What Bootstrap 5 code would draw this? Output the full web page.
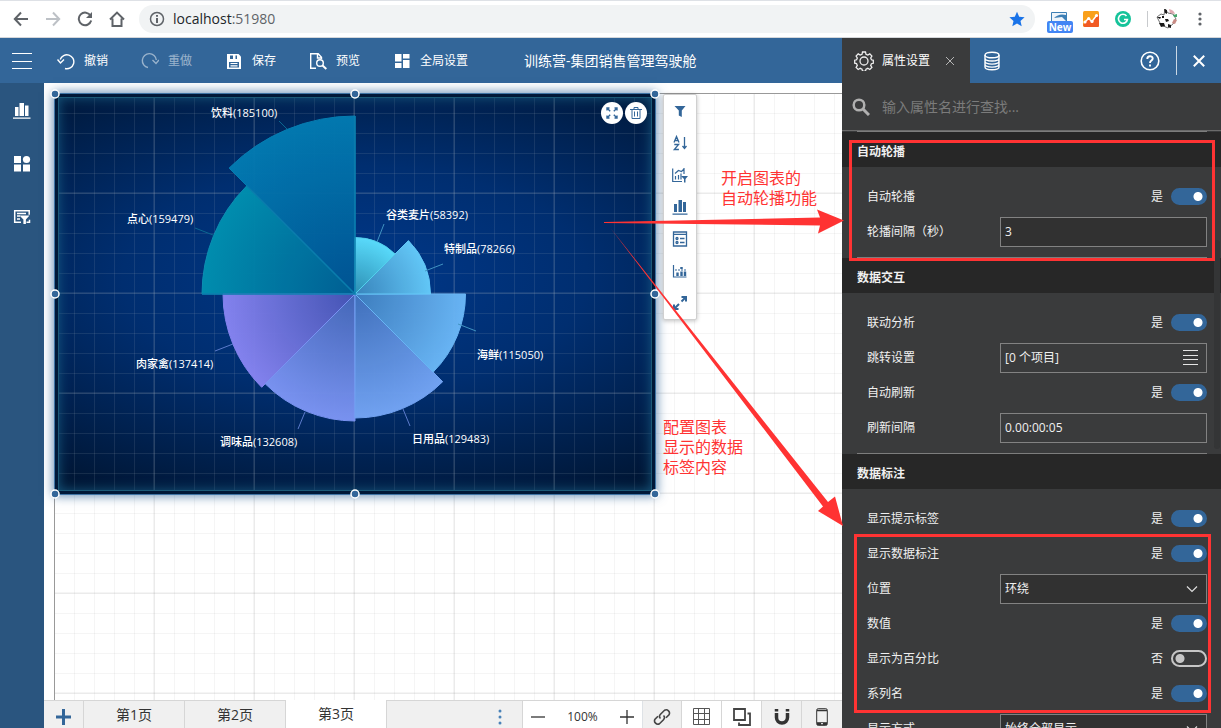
<!DOCTYPE html>
<html lang="zh-CN">
<head>
<meta charset="utf-8">
<meta name="viewport" content="width=device-width, initial-scale=1">
<title>训练营-集团销售管理驾驶舱</title>
<link href="https://cdn.jsdelivr.net/npm/bootstrap@5.3.0/dist/css/bootstrap.min.css" rel="stylesheet">
<style>
:root{--brand:#336699;--side:#2a557f;--panel:#3a3b3c;--note:#ff3333}
body{font-family:"Open Sans","Noto Sans CJK SC",sans-serif;font-size:12px;line-height:16px;color:#333;background:#fff}
svg{display:block;flex:none}
button{color:inherit;font-size:inherit}
.plain{background:none;border:0;padding:0}
/* browser bar */
.chromebar{height:38px;border-top:1px solid #dee1e6;border-bottom:1px solid #d5d7da;color:#5f6368;padding:0 15px 0 13px}
.navset{margin-right:14px}
.navset .plain{width:16px}
.omnibox{height:28px;border-radius:14px;background:#f1f3f4;padding:0 10px}
.urltext{font-size:14px;line-height:20px;color:#5f6368}
.newtag{left:-4px;top:10px;height:12px;width:26px;background:#4285f4;color:#fff;border-radius:2px;font:bold 10px/12px "Open Sans",sans-serif;text-align:center}
.vline{width:1px;height:16px;background:#c8cacd}
.more{width:12px}
/* application bars */
.topbar{height:45px;background:var(--brand);color:#fff}
.burger{width:44px}
.tools{padding-left:13px}
.tool{gap:9px;margin-right:33px}
.doc-title{font-size:14px;line-height:20px;margin-left:23px}
.sidebar{width:44px;background:var(--side);color:#fff;padding-top:18px;gap:34px}
/* canvas */
.stage{padding:10px 0 0 10px}
.sheet{border-left:1px solid #999;border-top:1px solid #999}
.sheet::before,.widget::before{content:"";position:absolute;inset:0;
 background-image:linear-gradient(90deg,var(--ln) 2px,transparent 2px),linear-gradient(var(--ln) 2px,transparent 2px),linear-gradient(90deg,var(--ln) 1px,transparent 1px),linear-gradient(var(--ln) 1px,transparent 1px);
 background-size:100px 100px,100px 100px,20px 20px,20px 20px;background-position:-2px 0,0 -2px,-1px 0,0 -1px}
.sheet{--ln:rgba(0,0,0,.04)}
.widget{--ln:rgba(170,180,190,.13);width:600px;height:400px;left:0;top:0;
 background:radial-gradient(ellipse 86% 62% at 50% 46%,#00388a 0%,#002e70 45%,#001634 100%);
 box-shadow:0 0 0 1px #3f74a5,0 0 10px 2px rgba(51,102,153,.75)}
.widget::after{content:"";position:absolute;inset:3px;border:1px solid #1c5a78;box-shadow:inset 0 0 12px 0 rgba(30,105,145,.75),0 0 0 3px #001838}
.widget>svg{position:absolute;inset:0;z-index:1;overflow:visible}
.chart-text{font-size:11px;font-weight:500;fill:#fff}
.widget-acts{top:8px;right:8px;z-index:2;gap:2px}
.round{width:22px;height:22px;border-radius:50%;background:#fff;color:var(--brand);border:0;padding:0}
.palette{left:608px;top:0;width:34px;padding:0;background:#fff;border:1px solid #d0d0d0;border-radius:2px;box-shadow:0 1px 4px rgba(0,0,0,.25);color:var(--brand)}
.palette .plain{height:32px}
.notes{position:absolute;right:-4px;top:-83px;z-index:5;pointer-events:none}
.note{position:absolute;z-index:5;margin:0;color:var(--note);font-family:"Liberation Sans","Noto Sans CJK SC",sans-serif;font-size:16px;line-height:20px}
.note-a{right:25px;top:86px}
.note-b{right:99px;top:335px}
/* page bar */
.pagebar{height:28px;background:#f0f0f0;border-top:1px solid #d6d6d6;font-size:14px}
.pagebar .plain{border-right:1px solid #d6d6d6}
.add{width:40px}
.page-tab{width:101px;font-size:14px}
.page-tab.active{background:#fff;margin-top:-1px}
.zoomer{width:120px;background:#fff;border-left:1px solid #d6d6d6;font-size:12px}
.zoomer .plain{border:0}
.pagebar .tail{width:40px;padding-top:4px}
.pagebar .tail:last-child{border:0}
/* property panel */
.panel{width:379px;background:var(--panel);color:#f0f0f0}
.ptab{width:128px;background:var(--panel);padding:0 15px 0 12px}
.dbtab{margin-left:14px}
.finder{height:48px;padding:0 10px;border-bottom:1px solid #6b6b6b}
.finder input{background:none;border:0;outline:0;color:#ddd;font-size:14px;line-height:20px;padding:0}
.finder input::placeholder{color:#7b7b7b}
.rule{height:1px;margin:0 14px 0 15px;background:#7d7d7d}
.sec-title{height:35px;background:#272727;font-size:12px;line-height:16px;font-weight:600;margin:0;padding:4px 15px 0}
.sec-body{padding:12px 14px 8px 25px}
.prop{height:35px}
.field,.form-select.field{width:207px;height:30px;border:1px solid #828282;border-radius:0;background-color:#313131;color:#f0f0f0;font-size:12px;line-height:16px;padding:0 4px}
.field.flat{background-color:var(--panel)}
.form-select.field{background-image:url("data:image/svg+xml,%3Csvg xmlns='http://www.w3.org/2000/svg' viewBox='0 0 12 12'%3E%3Cpath d='M1 3.5l5 5 5-5' fill='none' stroke='%23ddd' stroke-width='1.2'/%3E%3C/svg%3E");background-size:12px 12px;background-position:right 8px center}
.prop .form-check-input{width:36px;height:17px;margin:0;float:none;border-radius:9px;border:2px solid #c6c6c6;background:radial-gradient(circle at 7px 50%,#c6c6c6 4px,transparent 5px)}
.prop .form-check-input:checked{border-color:var(--brand);background:radial-gradient(circle at 25px 50%,#fff 4px,transparent 5px) var(--brand)}
.frame-a,.frame-b{position:absolute;border:3px solid var(--note);pointer-events:none;z-index:3}
.frame-a{inset:8px 6px -3px 7px}
.frame-b{inset:-2px -4px 33px -13px}
.thumb{position:absolute;right:1px;top:108px;width:6px;height:209px;border-radius:3px;background:#343536}
</style>
</head>
<body class="vh-100 d-flex flex-column overflow-hidden">
<header class="chromebar d-flex align-items-center flex-shrink-0">
  <div class="navset d-flex gap-3">
    <button class="plain" aria-label="后退"><svg width="16" height="16" fill="none" stroke="#5f6368" stroke-width="2"><path d="M15 8H2.500M8 1.500L1.800 8 8 14.500"/></svg></button>
    <button class="plain" aria-label="前进"><svg width="16" height="16" fill="none" stroke="#bdc1c6" stroke-width="2"><path d="M1 8h12.500M8 1.500L14.200 8 8 14.500"/></svg></button>
    <button class="plain" aria-label="刷新"><svg width="16" height="16" fill="none" stroke="#5f6368" stroke-width="2"><path d="M13.600 4.800A6.300 6.300 0 1 0 14.200 9.500"/><path d="M15 1v6H9z" fill="#5f6368" stroke="none"/></svg></button>
    <button class="plain" aria-label="主页"><svg width="16" height="16" fill="none" stroke="#5f6368" stroke-width="2"><path d="M1 8.500L8 1.600l7 6.900M3.500 7.500V15h9V7.500"/></svg></button>
  </div>
  <div class="omnibox d-flex align-items-center flex-grow-1 gap-2">
    <svg width="16" height="16" fill="none" stroke="#5f6368" stroke-width="1.500"><circle cx="8" cy="8" r="6.500"/><path d="M8 7v5M8 4v1.700" stroke-width="2"/></svg>
    <div class="urltext flex-grow-1"><span class="text-dark">localhost</span>:51980</div>
    <svg width="16" height="16" fill="#1a73e8"><path d="M8 .8l2.200 5 5.400.5-4.100 3.600 1.200 5.300L8 12.400l-4.700 2.800 1.200-5.300L.4 6.300l5.400-.5z"/></svg>
  </div>
  <div class="d-flex align-items-center gap-3 ps-3">
    <div class="position-relative"><svg width="16" height="16"><path d="M.5 1.500h15v9H.5z" fill="#eef4fa" stroke="#3c7fb5"/><path d="M3 7q5-5 12-3v6l-4-4z" fill="#3c7fb5"/></svg><span class="newtag position-absolute">New</span></div>
    <svg width="16" height="16"><rect width="16" height="16" rx="1.500" fill="#f9a01b"/><path d="M0 14L6 7l3 3 7-7v11.500a1.500 1.500 0 0 1-1.500 1.500h-13z" fill="#f15a24"/><path d="M1.500 11.500L5.500 7.500l3.500 3 4.500-6" fill="none" stroke="#fff" stroke-width="1.500"/><g fill="#fff"><circle cx="2" cy="11" r="1.600"/><circle cx="5.700" cy="7.500" r="1.600"/><circle cx="9" cy="10.500" r="1.600"/><circle cx="13.500" cy="4.500" r="1.600"/></g></svg>
    <svg width="16" height="16"><circle cx="8" cy="8" r="8" fill="#15c39a"/><path d="M11.500 5A4.500 4.500 0 1 0 12.400 8.500H9" fill="none" stroke="#fff" stroke-width="1.600"/></svg>
    <div class="d-flex align-items-center gap-2"><div class="vline"></div>
    <svg width="22" height="22"><path d="M1 9l4-3 3 1 1-6 3 4 5 1 3 5-3 5-5 4-7-3z" fill="#fff" stroke="#333" stroke-width=".7"/><path d="M8 1l3 1 0 4-2-1zM1 9l4 0-1 2zM6 8l2 0 0 2-2 0zM9 11l3 0 1 2-3 1zM3 15l5 0 1 3-4 1zM12 16l3 1 0 3-3-1z" fill="#191919"/><path d="M13 1q5 1 6 5l-5-1z" fill="#e0a9b1"/><path d="M17 7l4-1 0 3-3 0z" fill="#47a56b"/><path d="M18 11l3 1-2 4-3-1z" fill="#c98a84"/></svg></div>
    <button class="plain more" aria-label="菜单"><svg class="mx-auto" width="4" height="16" fill="#5f6368"><circle cx="2" cy="3" r="1.600"/><circle cx="2" cy="8" r="1.600"/><circle cx="2" cy="13" r="1.600"/></svg></button>
  </div>
</header>

<div class="d-flex flex-grow-1" style="min-height:0">
  <div class="d-flex flex-column flex-grow-1" style="min-width:0">
    <nav class="topbar d-flex align-items-center flex-shrink-0" aria-label="工具栏">
      <button class="plain burger" aria-label="菜单"><svg class="mx-auto" width="20" height="16" stroke="#fff"><path d="M0 .5h20M0 8.500h20M0 15.500h20"/></svg></button>
      <div class="tools d-flex">
        <button class="plain tool d-flex align-items-center"><svg width="18" height="18" fill="none" stroke="#fff" stroke-width="1.400"><path d="M8 16.500A7 7 0 1 0 3.200 7.500"/><path d="M.5 7.500L3.500 11 7 7.500" /></svg>撤销</button>
        <button class="plain tool d-flex align-items-center opacity-50"><svg width="18" height="18" fill="none" stroke="#fff" stroke-width="1.400"><path d="M7 15.500a7 7 0 1 1 8.300-7.500"/><path d="M11.500 8l3.500 3.500L18 8"/></svg>重做</button>
        <button class="plain tool d-flex align-items-center"><svg width="18" height="18"><path d="M2 2h11.500L16 4.500V17H2z" fill="#fff"/><path d="M5 3.500h3v3.500H5zM10.500 3.500h1.500v3.500h-1.500zM4 10h10v5.500H4z" fill="#369"/><path d="M5.500 11.500h7M5.500 13.800h7" stroke="#fff" stroke-width="1.200"/></svg>保存</button>
        <button class="plain tool d-flex align-items-center"><svg width="18" height="18" fill="none" stroke="#fff" stroke-width="1.400"><path d="M7 16.300H1.700V1.700h7.500l3.300 3.500V7M8.500 2v4H12"/><circle cx="11" cy="11" r="3.300"/><path d="M13.300 13.300L17.300 17" stroke-width="2"/></svg>预览</button>
        <button class="plain tool d-flex align-items-center"><svg width="18" height="18" fill="#fff"><path d="M2 2h6.500v7.500H2zM10 2h6.500v4.500H10zM2 11h6.500v5H2zM10 8h6.500v8H10z"/></svg>全局设置</button>
      </div>
      <span class="doc-title text-nowrap">训练营-集团销售管理驾驶舱</span>
    </nav>

    <div class="d-flex flex-grow-1" style="min-height:0">
      <aside class="sidebar d-flex flex-column align-items-center flex-shrink-0">
        <button class="plain" aria-label="图表"><svg width="18" height="19" fill="#fff"><path d="M2 6h3.500v9H2zM6.500 2h4.500v13H6.500zM12 4.500h3.500V15H12zM0 16.500h17.500v1.300H0z"/></svg></button>
        <button class="plain" aria-label="组件"><svg width="18" height="19" fill="#fff"><path d="M1 2h7v7H1zM1 10.500h7v7H1zM10 10.500h7v7h-7z"/><circle cx="13.500" cy="5.500" r="3.600"/></svg></button>
        <button class="plain" aria-label="过滤"><svg width="18" height="19" fill="none" stroke="#fff" stroke-width="1.500"><path d="M8 15.200H1.700V3.700h14.500v4M4 6.500h9M4 9h3M4 12h3M13.500 15.200h3v-2.500"/><path d="M6.500 8.500h10l-3.600 4v4.500h-2.500v-4.500z" fill="#fff" stroke="none"/></svg></button>
      </aside>
      <div class="d-flex flex-column flex-grow-1 position-relative" style="min-width:0">
        <main class="stage flex-grow-1 d-flex" style="min-height:0">
          <div class="sheet position-relative flex-grow-1">
            <section class="widget position-absolute" aria-label="销售图表">
              <svg width="600" height="400" viewBox="0 0 600 400">
                <defs>
                  <radialGradient id="g1" gradientUnits="userSpaceOnUse" cx="300" cy="200" r="57"><stop offset="0" stop-color="#2e91b5"/><stop offset="1" stop-color="#5ce0ff"/></radialGradient>
                  <radialGradient id="g2" gradientUnits="userSpaceOnUse" cx="300" cy="200" r="76"><stop offset="0" stop-color="#3a86bd"/><stop offset="1" stop-color="#66ccfb"/></radialGradient>
                  <radialGradient id="g3" gradientUnits="userSpaceOnUse" cx="300" cy="200" r="111"><stop offset="0" stop-color="#3f7fc0"/><stop offset="1" stop-color="#6cb9f8"/></radialGradient>
                  <radialGradient id="g4" gradientUnits="userSpaceOnUse" cx="300" cy="200" r="125"><stop offset="0" stop-color="#4272bd"/><stop offset="1" stop-color="#75a6f6"/></radialGradient>
                  <radialGradient id="g5" gradientUnits="userSpaceOnUse" cx="300" cy="200" r="128"><stop offset="0" stop-color="#4668b9"/><stop offset="1" stop-color="#7d96f5"/></radialGradient>
                  <radialGradient id="g6" gradientUnits="userSpaceOnUse" cx="300" cy="200" r="133"><stop offset="0" stop-color="#4655b5"/><stop offset="1" stop-color="#8885f2"/></radialGradient>
                  <radialGradient id="g7" gradientUnits="userSpaceOnUse" cx="300" cy="200" r="154"><stop offset="0" stop-color="#006094"/><stop offset="1" stop-color="#0090b0"/></radialGradient>
                  <radialGradient id="g8" gradientUnits="userSpaceOnUse" cx="300" cy="200" r="178"><stop offset="0" stop-color="#005493"/><stop offset="1" stop-color="#037bb2"/></radialGradient>
                </defs>
                <g stroke-width="1" opacity=".97">
                  <path d="M300 200L174.100 74.100A178 178 0 0 1 300 22z" fill="url(#g8)" stroke="#0780b4"/>
                  <path d="M300 200H147A153 153 0 0 1 191.800 91.800z" fill="url(#g7)" stroke="#0d91b4"/>
                  <path d="M300 200L206.700 293.300A132 132 0 0 1 168 200z" fill="url(#g6)" stroke="#8885f2"/>
                  <path d="M300 200V327A127 127 0 0 1 210.200 289.800z" fill="url(#g5)" stroke="#7d96f5"/>
                  <path d="M300 200L387.700 287.700A124 124 0 0 1 300 324z" fill="url(#g4)" stroke="#75a6f6"/>
                  <path d="M300 200H410.500A110.500 110.500 0 0 1 378.100 278.100z" fill="url(#g3)" stroke="#6cb9f8"/>
                  <path d="M300 200L353.400 146.600A75.500 75.500 0 0 1 375.500 200z" fill="url(#g2)" stroke="#66ccfb"/>
                  <path d="M300 200V143.500A56.500 56.500 0 0 1 340 160z" fill="url(#g1)" stroke="#55d5f0"/>
                  <path d="M147 200H300L192 92M300 200V22" fill="none" stroke="#0b7fae" stroke-width="1.500"/>
                </g>
                <g fill="none" stroke-width="1"><path d="M232 35l-8-8M158 141l-18-7" stroke="#0b6790"/><path d="M322 148l7-18M370 177l18-7M403 230l18 7" stroke="#4193c2"/><path d="M348 315l7 17M250 318l-7 17M178 250l-18 7" stroke="#5c7bcb"/></g>
                <g class="chart-text"><text x="156" y="23">饮料(185100)</text><text x="72" y="129">点心(159479)</text><text x="331" y="125">谷类麦片(58392)</text><text x="389" y="159">特制品(78266)</text><text x="422" y="265">海鲜(115050)</text><text x="357" y="349">日用品(129483)</text><text x="165" y="352">调味品(132608)</text><text x="81" y="274">肉家禽(137414)</text></g>
                <g fill="#336699" stroke="#fff" stroke-width="1.500"><circle cx="0" cy="0" r="4"/><circle cx="300" cy="0" r="4"/><circle cx="600" cy="0" r="4"/><circle cx="0" cy="200" r="4"/><circle cx="600" cy="200" r="4"/><circle cx="0" cy="400" r="4"/><circle cx="300" cy="400" r="4"/><circle cx="600" cy="400" r="4"/></g>
              </svg>
              <div class="widget-acts position-absolute d-flex">
                <button class="round" aria-label="最大化"><svg class="mx-auto" width="12" height="12" fill="none" stroke="#369" stroke-width="1.400"><path d="M1 3.500V1h2.500M1 1l3.200 3.200M8.500 1H11v2.500M11 1L7.800 4.200M1 8.500V11h2.500M1 11l3.200-3.200M11 8.500V11H8.500M11 11L7.800 7.800"/></svg></button>
                <button class="round" aria-label="删除"><svg class="mx-auto" width="12" height="12" fill="none" stroke="#369"><path d="M0 2.500h12M4 2.500v-2h4v2M2 2.500v9h8v-9M4.500 4.500v5M7.500 4.500v5"/></svg></button>
              </div>
            </section>
            <div class="palette position-absolute d-flex flex-column">
              <button class="plain" aria-label="筛选"><svg class="mx-auto" width="16" height="16" fill="#369"><path d="M2.500 3h11L9.800 7.500V14l-3-1.500v-5z"/></svg></button>
              <button class="plain" aria-label="排序"><svg class="mx-auto" width="16" height="16" fill="none" stroke="#369" stroke-width="1.300"><path d="M2 7.500L4.500 1.500 7 7.500M3 5.500h3M2.300 9.500h4.300l-4.300 5h4.600M12.500 2v11.500M10.500 11l2 2.500 2-2.500"/></svg></button>
              <button class="plain" aria-label="图表筛选"><svg class="mx-auto" width="16" height="16" fill="none" stroke="#369" stroke-width="1.200"><path d="M.7 1.500v13H10M3.500 9v3.500M6.500 8v4.500M9 6.500v6M3 6.500l3.500-3 3 1L12 2M12 1v6"/><path d="M9 9h7l-2.500 3v3.500H12V12z" fill="#369" stroke="none"/></svg></button>
              <button class="plain" aria-label="图表类型"><svg class="mx-auto" width="16" height="16" fill="#369"><path d="M2 5h3v8H2zM6.500 1h3.500v12H6.500zM11 3h3v10h-3zM.5 14.500h15v1.200H.5z"/></svg></button>
              <button class="plain" aria-label="图例"><svg class="mx-auto" width="16" height="16" fill="none" stroke="#369" stroke-width="1.300"><path d="M1.500 1h13v14h-13zM1.500 3.300h13M8 7.500h4.500M8 11.500h4.500"/><circle cx="5" cy="7.500" r="1"/><circle cx="5" cy="11.500" r="1"/></svg></button>
              <button class="plain" aria-label="参考线"><svg class="mx-auto" width="16" height="16" fill="none" stroke="#369" stroke-width="1.200"><path d="M1.500 2v12h13"/><path d="M3 7h11" stroke-dasharray="2 1"/><path d="M5.500 9.500V13M9.500 8.500V13M13 8.500V13" stroke-width="2.400"/><path d="M9.500 4v2" stroke-width="2.500"/></svg></button>
              <button class="plain" aria-label="展开"><svg class="mx-auto" width="16" height="16" fill="none" stroke="#369" stroke-width="2"><path d="M9.500 2h4.500v4.500M14 2L9.500 6.500M2 9.500V14h4.500M2 14l5-5"/></svg></button>
            </div>
          </div>
        </main>
        <svg class="notes" width="242" height="530" fill="#ff3333" viewBox="604 0 242 530"><path d="M604 222L820 217.500 817 209.500 844 220.500 818 233.500 820 225.500 604 223z"/><path d="M610 227.500L828 502 835 496.500 843 526 818 511 823 506.500z"/></svg>
        <p class="note note-a">开启图表的<br>自动轮播功能</p>
        <p class="note note-b">配置图表<br>显示的数据<br>标签内容</p>
        <footer class="pagebar d-flex flex-shrink-0 position-relative">
          <button class="plain add pt-1" aria-label="添加页面"><svg class="mx-auto" width="15" height="16" stroke="#336699" stroke-width="3"><path d="M7.500 0v16M0 8h15"/></svg></button>
          <button class="plain page-tab">第1页</button><button class="plain page-tab">第2页</button><button class="plain page-tab active">第3页</button>
          <button class="plain ms-auto border-0 px-3 pt-1" aria-label="更多"><svg class="me-1" width="4" height="16" fill="#4a82b8"><circle cx="2" cy="2" r="1.500"/><circle cx="2" cy="8" r="1.500"/><circle cx="2" cy="14" r="1.500"/></svg></button>
          <div class="zoomer d-flex align-items-center justify-content-between px-2 pt-1"><button class="plain" aria-label="缩小"><svg width="14" height="14" stroke="#333" stroke-width="1.300"><path d="M0 7h14"/></svg></button><span>100%</span><button class="plain" aria-label="放大"><svg width="14" height="14" stroke="#333" stroke-width="1.300"><path d="M0 7h14M7 0v14"/></svg></button></div>
          <button class="plain tail border-start" aria-label="链接"><svg class="mx-auto" width="18" height="18" fill="none" stroke="#444" stroke-width="1.600"><path d="M7.500 10.500a3 3 0 0 1 0-4.200l4-4a3.300 3.300 0 0 1 4.500 4.500l-3 3"/><path d="M10.500 7.500a3 3 0 0 1 0 4.200l-4 4A3.300 3.300 0 0 1 2 11.200l3-3"/></svg></button>
          <button class="plain tail bg-white" aria-label="网格"><svg class="mx-auto" width="17" height="17" fill="none" stroke="#555"><path d="M.5.500h16v16H.5zM.5 5.500h16M.5 11.500h16M5.500.500v16M11.500.500v16"/></svg></button>
          <button class="plain tail bg-white" aria-label="图层"><svg class="mx-auto" width="18" height="18" fill="none" stroke="#444" stroke-width="1.800"><path d="M1 1h11v11H1zM14.500 5.500H17V17H6v-2.500"/></svg></button>
          <button class="plain tail" aria-label="吸附"><svg class="mx-auto" width="18" height="18" fill="none" stroke="#333" stroke-width="3.500"><path d="M3.500 5v4.500a5.500 5.500 0 0 0 11 0V5M3.500 1v2.500M14.500 1v2.500"/></svg></button>
          <button class="plain tail" aria-label="移动端"><svg class="mx-auto" width="12" height="18" fill="none" stroke="#333"><rect x=".7" y=".7" width="10.600" height="16.600" rx="1.500"/><path d="M1 14.200h10v3H1z" fill="#333" stroke="none"/><path d="M1 2.500h10" stroke-width="1.500"/><path d="M5 15.700h2" stroke="#fff"/></svg></button>
        </footer>
      </div>
    </div>
  </div>

  <aside class="panel d-flex flex-column flex-shrink-0 overflow-hidden">
    <div class="topbar d-flex flex-shrink-0">
      <div class="ptab d-flex align-items-center">
        <svg width="20" height="20" fill="none" stroke="#eee" stroke-width="1.300"><path d="M8.500 1h3l.5 2.300 1.800.8 2-1.200 2.100 2.100-1.200 2 .8 1.800 1.800.5v3l-1.900.4-.7 1.700 1.200 2-2.100 2.100-2-1.200-1.800.8-.5 2h-3l-.5-2-1.800-.8-2 1.200-2.100-2.100 1.200-2-.8-1.800-1.800-.4v-3l1.900-.4.7-1.800-1.200-2 2.100-2.100 2 1.200L8 3.300z"/><circle cx="10" cy="10" r="4"/></svg>
        <span class="ms-2 me-auto">属性设置</span>
        <button class="plain" aria-label="关闭标签"><svg width="10" height="10" stroke="#b5b5b5"><path d="M1 1l8 8M9 1L1 9"/></svg></button>
      </div>
      <button class="plain dbtab" aria-label="数据"><svg width="16" height="20" fill="none" stroke="#fff" stroke-width="1.400"><ellipse cx="8" cy="4" rx="7" ry="2.800"/><path d="M1 4v12c0 3.700 14 3.700 14 0V4M1 7.200c0 3.700 14 3.700 14 0M1 10.300c0 3.700 14 3.700 14 0M1 13.300c0 3.700 14 3.700 14 0"/></svg></button>
      <div class="d-flex align-items-center ms-auto me-3 gap-3">
        <button class="plain me-n1" aria-label="帮助"><svg width="20" height="20" fill="none" stroke="#fff" stroke-width="1.600"><circle cx="10" cy="10" r="8.800"/><path d="M7.300 8c0-3.700 5.400-3.500 5.400-.4 0 2-2.700 2-2.700 4.400M10 13.500v2" stroke-width="1.900"/></svg></button>
        <div class="vr opacity-75 my-2"></div>
        <button class="plain" aria-label="关闭"><svg width="12" height="12" stroke="#fff" stroke-width="2"><path d="M.8.800l10.400 10.400M11.200.800L.8 11.200"/></svg></button>
      </div>
    </div>
    <div class="finder d-flex align-items-center flex-shrink-0">
      <svg width="18" height="18" fill="none" stroke="#b0b0b0" stroke-width="2.500"><circle cx="7" cy="7" r="5.300"/><path d="M11 11l6 6" stroke-width="3"/></svg>
      <input class="flex-grow-1 ms-2 ps-1" type="text" placeholder="输入属性名进行查找..." aria-label="查找属性">
    </div>
    <div class="rule flex-shrink-0"></div>
    <div class="position-relative">
      <section class="position-relative">
        <h2 class="sec-title d-flex align-items-center">自动轮播</h2>
        <div class="sec-body">
          <div class="prop d-flex align-items-center"><label class="me-auto" for="p1">自动轮播</label><span class="me-2">是</span><input class="form-check-input" type="checkbox" role="switch" id="p1" checked></div>
          <div class="prop d-flex align-items-center"><label class="me-auto" for="p2">轮播间隔（秒）</label><input class="field" type="text" id="p2" value="3"></div>
        </div>
        <div class="rule"></div>
        <div class="frame-a"></div>
      </section>
      <section>
        <h2 class="sec-title d-flex align-items-center">数据交互</h2>
        <div class="sec-body">
          <div class="prop d-flex align-items-center"><label class="me-auto" for="p3">联动分析</label><span class="me-2">是</span><input class="form-check-input" type="checkbox" role="switch" id="p3" checked></div>
          <div class="prop d-flex align-items-center"><label class="me-auto" for="p4">跳转设置</label><button class="field flat d-flex align-items-center justify-content-between" id="p4">[0 个项目]<svg class="me-1" width="15" height="15" stroke="#e5e5e5"><path d="M0 .5h15M0 5.500h15M0 9.500h15M0 14.500h15"/></svg></button></div>
          <div class="prop d-flex align-items-center"><label class="me-auto" for="p5">自动刷新</label><span class="me-2">是</span><input class="form-check-input" type="checkbox" role="switch" id="p5" checked></div>
          <div class="prop d-flex align-items-center"><label class="me-auto" for="p6">刷新间隔</label><input class="field flat" type="text" id="p6" value="0.00:00:05"></div>
        </div>
        <div class="rule"></div>
      </section>
      <section>
        <h2 class="sec-title d-flex align-items-center">数据标注</h2>
        <div class="sec-body">
          <div class="prop d-flex align-items-center"><label class="me-auto" for="p7">显示提示标签</label><span class="me-2">是</span><input class="form-check-input" type="checkbox" role="switch" id="p7" checked></div>
          <div class="position-relative">
            <div class="prop d-flex align-items-center"><label class="me-auto" for="p8">显示数据标注</label><span class="me-2">是</span><input class="form-check-input" type="checkbox" role="switch" id="p8" checked></div>
            <div class="prop d-flex align-items-center"><label class="me-auto" for="p9">位置</label><select class="form-select field" id="p9"><option>环绕</option></select></div>
            <div class="prop d-flex align-items-center"><label class="me-auto" for="p10">数值</label><span class="me-2">是</span><input class="form-check-input" type="checkbox" role="switch" id="p10" checked></div>
            <div class="prop d-flex align-items-center"><label class="me-auto" for="p11">显示为百分比</label><span class="me-2">否</span><input class="form-check-input" type="checkbox" role="switch" id="p11"></div>
            <div class="prop d-flex align-items-center"><label class="me-auto" for="p12">系列名</label><span class="me-2">是</span><input class="form-check-input" type="checkbox" role="switch" id="p12" checked></div>
            <div class="prop d-flex align-items-center"><label class="me-auto" for="p13">显示方式</label><select class="form-select field" id="p13"><option>始终全部显示</option></select></div>
            <div class="frame-b"></div>
          </div>
        </div>
      </section>
      <div class="thumb"></div>
    </div>
  </aside>
</div>
<script src="https://cdn.jsdelivr.net/npm/bootstrap@5.3.0/dist/js/bootstrap.bundle.min.js"></script>
</body>
</html>
